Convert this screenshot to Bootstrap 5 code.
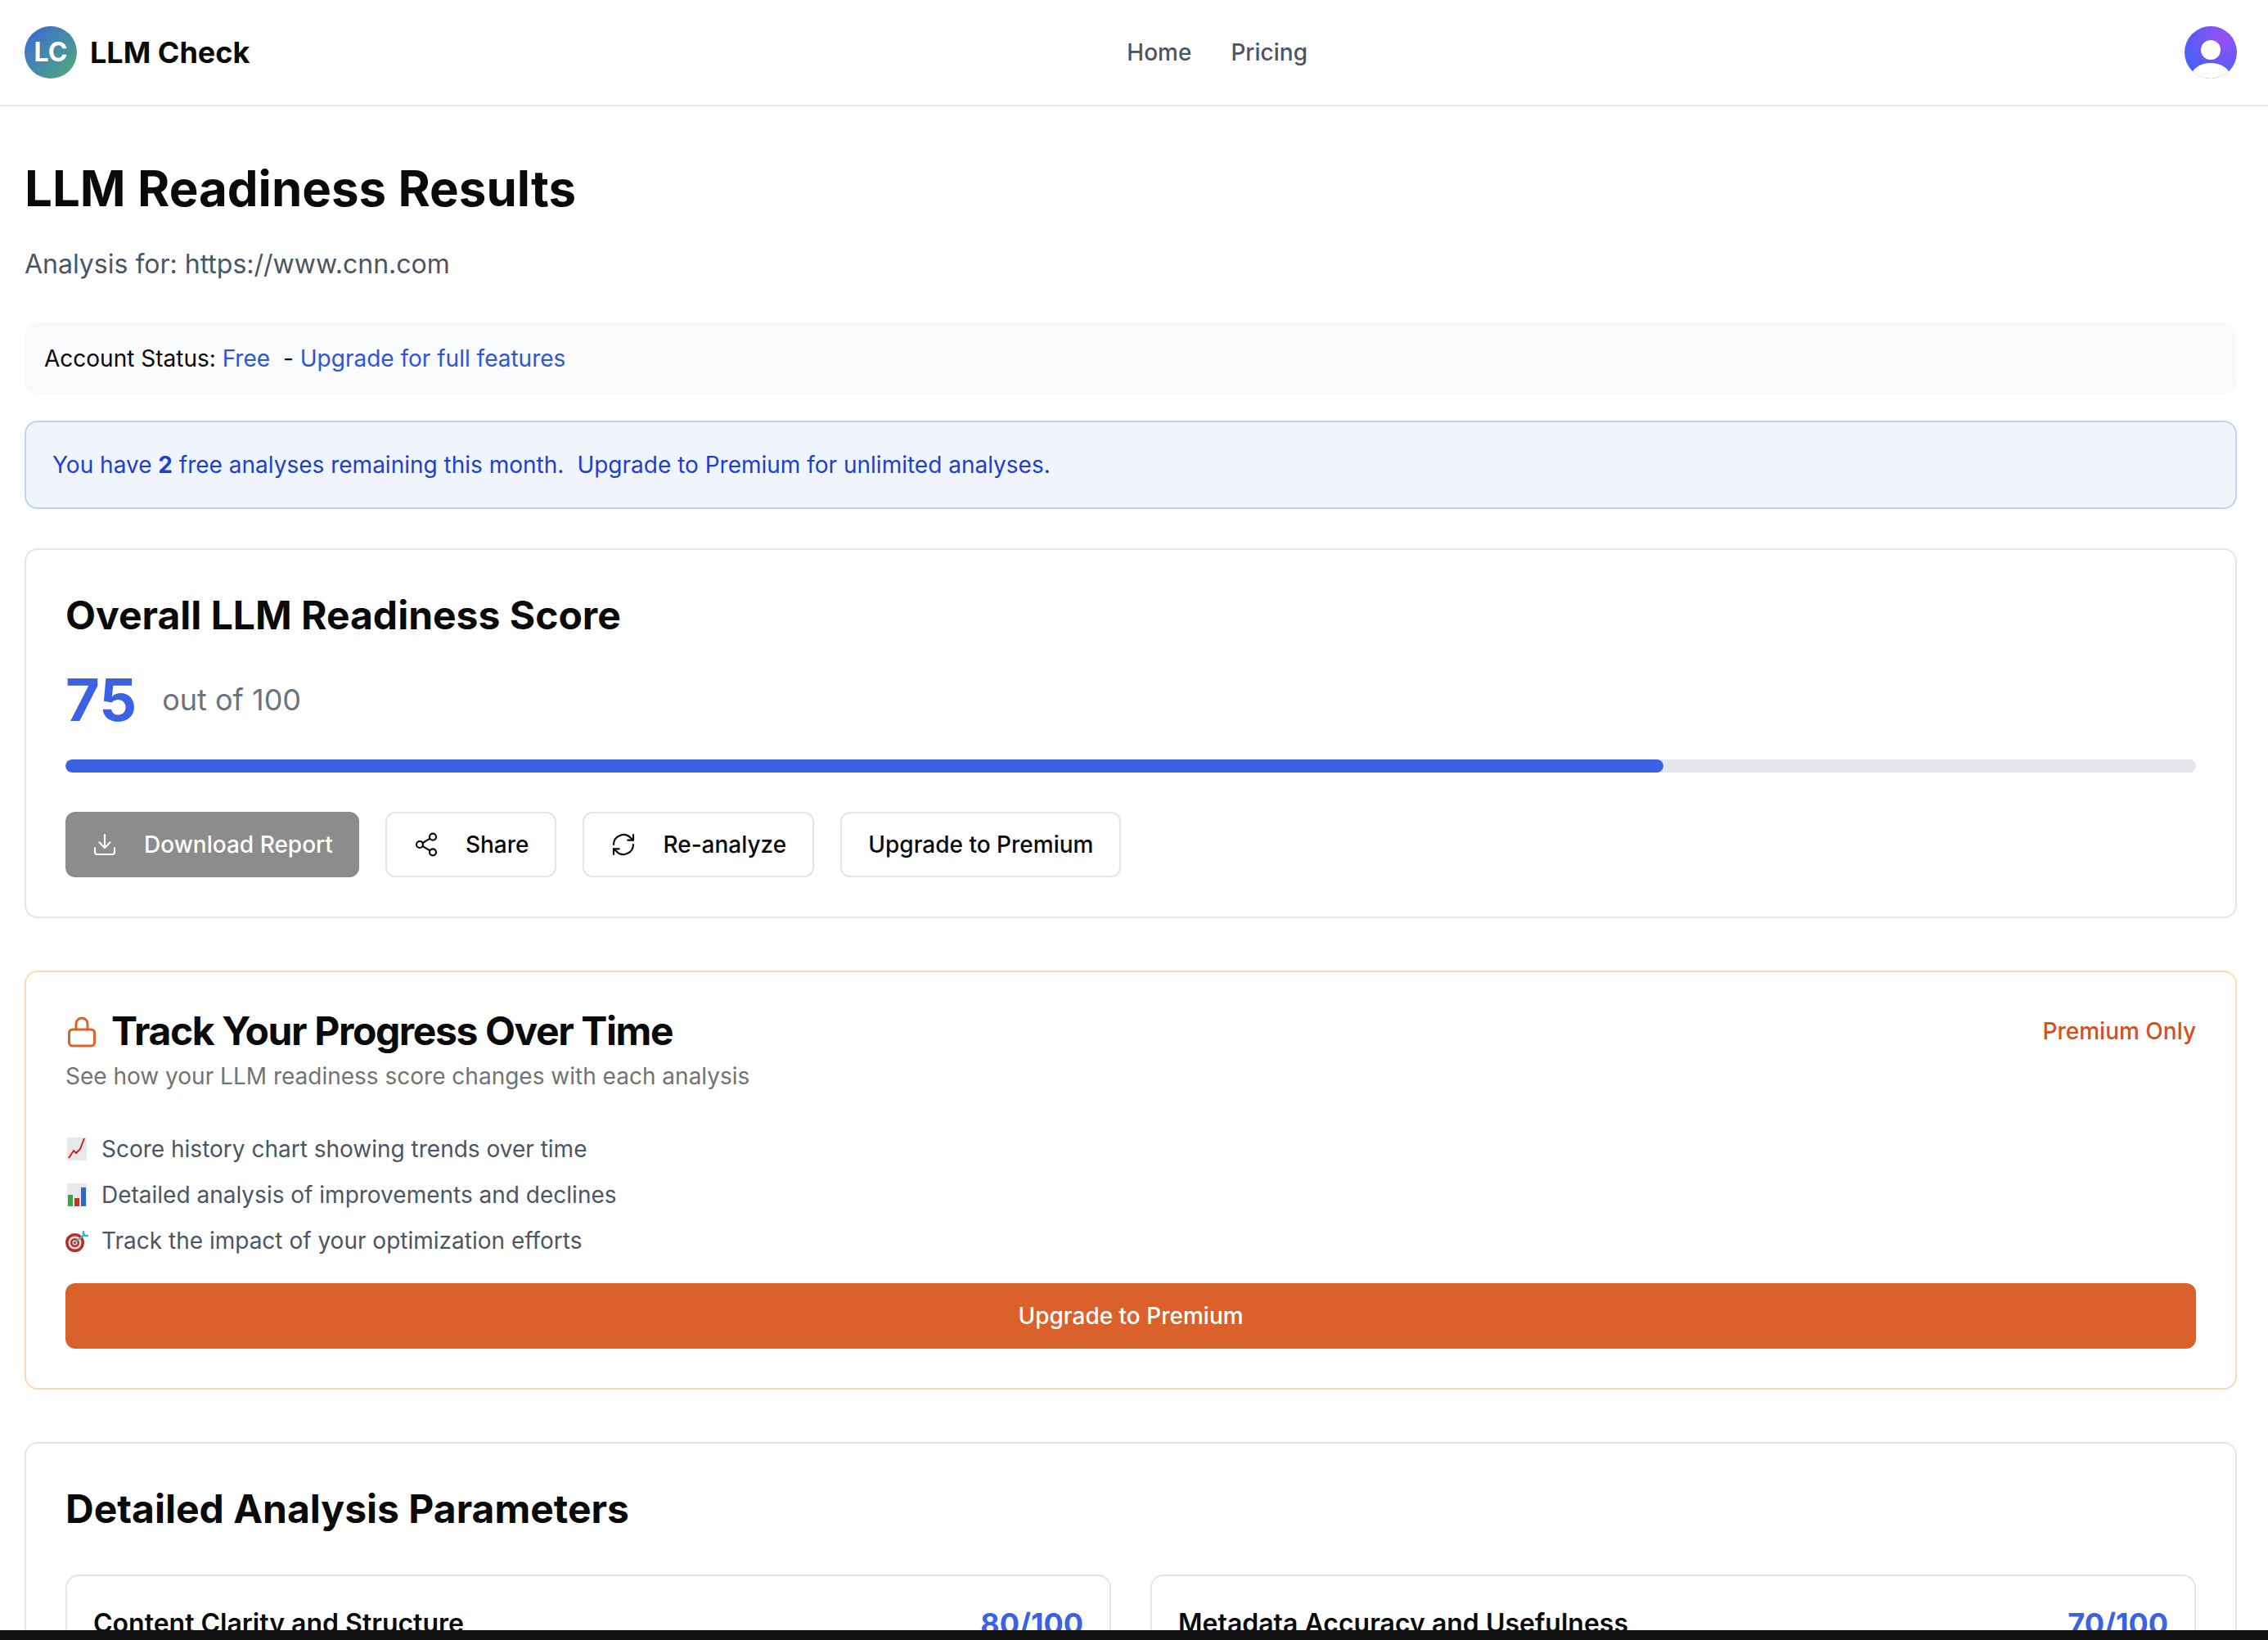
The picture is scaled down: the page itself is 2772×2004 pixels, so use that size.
<!DOCTYPE html>
<html lang="en">
<head>
    <meta charset="UTF-8">
    <meta name="viewport" content="width=device-width, initial-scale=1.0">
    <title>LLM Check</title>
    <link href="https://cdn.jsdelivr.net/npm/bootstrap@5.3.0/dist/css/bootstrap.min.css" rel="stylesheet">
    <script src="https://cdn.jsdelivr.net/npm/bootstrap@5.3.0/dist/js/bootstrap.bundle.min.js"></script>
    <style>
        html, body { height: 2004px; overflow: hidden; }
        body { font-family: Inter, "Liberation Sans", sans-serif; color: #0a0a0a; background: #fff; font-size: 28px; }
        .page-view { height: 1992px; overflow: hidden; }
        .bottom-strip { height: 12px; background: #111; }

        .top-bar { height: 130px; border-bottom: 2px solid #e5e5e5; padding: 0 38px 0 30px; position: relative; }
        .logo-dot { width: 64px; height: 64px; border-radius: 50%; background: linear-gradient(135deg, #3b66d9, #4fae76); color: #fff; font-size: 32px; font-weight: 700; }
        .logo-name { font-size: 36px; font-weight: 700; margin-left: 16px; color: #0a0a0a; }
        .top-links { gap: 48px; }
        .top-links .nav-link { padding: 0; font-size: 28px; font-weight: 500; color: #4b5563; }
        .avatar-dot { width: 64px; height: 64px; }

        .content-wrap { padding: 60px 38px 0 30px; }
        .page-title { font-size: 60px; font-weight: 700; line-height: 80px; margin: 0 0 29px; }
        .page-sub { font-size: 32px; line-height: 48px; color: #4b5563; margin: 0 0 47px; }

        .status-box { height: 88px; padding: 0 24px; background: #f9fafb; border-radius: 16px; font-size: 28px; margin-bottom: 32px; }
        .blue-link { color: #2f55d4; text-decoration: none; }
        .quota-box.alert { height: 108px; padding: 0 32px; background: #eff4fd; border: 2px solid #bfd4f7; border-radius: 16px; color: #1e40cf; font-size: 28px; margin-bottom: 48px; }
        .quota-box b { font-weight: 700; }
        .quota-box a { color: #1e40cf; text-decoration: none; font-weight: 400; }

        .panel.card { border: 2px solid #e5e5e5; border-radius: 16px; padding: 50px 48px 48px; --bs-card-bg: #fff; }
        .panel-title { font-size: 48px; font-weight: 700; line-height: 60px; margin: 0; }
        .score-num { font-size: 72px; font-weight: 700; color: #3a62e3; line-height: 80px; }
        .score-of { font-size: 36px; color: #6b7280; margin-left: 31px; }
        .score-row { margin: 33px 0 33px; }
        .score-bar.progress { height: 16px; border-radius: 8px; background: #e5e7eb; margin-bottom: 48px; }
        .score-bar .progress-bar { background: #3a62e3; border-radius: 8px; }

        .act-row { gap: 32px; }
        .act-btn.btn { height: 80px; padding: 0 32px; border: 2px solid #e5e5e5; border-radius: 12px; background: #fff; color: #0a0a0a; font-size: 28px; font-weight: 500; gap: 32px; }
        .act-btn.act-dim { background: #8c8c8c; border: 0; color: #fff; opacity: 1; }
        .act-btn svg { width: 32px; height: 32px; }

        .lock-panel.card { border-color: #fbd9ae; margin-top: 64px; padding: 42px 48px 48px; }
        .lock-title { font-size: 48px; font-weight: 700; line-height: 60px; margin: 0; letter-spacing: -1.4px; }
        .lock-tag { color: #d4501b; font-size: 28px; font-weight: 500; }
        .lock-sub { color: #737373; font-size: 28px; line-height: 40px; margin: 5px 0 41px; }
        .perk-list { list-style: none; margin: 0 0 24px; padding: 0; color: #4b5563; }
        .perk-list li { height: 56px; gap: 16px; }
        .perk-list svg { width: 28px; height: 28px; flex: none; }
        .upgrade-wide.btn { height: 80px; background: #da612c; border: 0; border-radius: 12px; color: #fff; font-size: 28px; font-weight: 500; }

        .detail-panel.card { margin-top: 64px; }
        .detail-panel { height: 400px; }
        .detail-title { font-size: 48px; font-weight: 700; line-height: 60px; margin: 0 0 50px; }
        .param-grid { display: grid; grid-template-columns: 1fr 1fr; gap: 48px; }
        .param-box.card { border: 2px solid #e5e5e5; border-radius: 16px; padding: 36px 32px 32px; }
        .param-name { font-size: 32px; font-weight: 600; line-height: 44px; }
        .param-score { font-size: 36px; font-weight: 700; color: #3a62e3; line-height: 44px; }
    </style>
</head>
<body class="d-flex flex-column">
<div class="page-view">
    <nav class="top-bar d-flex align-items-center justify-content-between">
        <a class="d-flex align-items-center text-decoration-none" href="#">
            <span class="logo-dot d-flex align-items-center justify-content-center">LC</span>
            <span class="logo-name">LLM Check</span>
        </a>
        <ul class="nav top-links">
            <li class="nav-item"><a class="nav-link" href="#">Home</a></li>
            <li class="nav-item"><a class="nav-link" href="#">Pricing</a></li>
        </ul>
        <svg class="avatar-dot" viewBox="0 0 64 64">
            <defs>
                <radialGradient id="avatarFill" cx="72%" cy="22%" r="75%">
                    <stop offset="0" stop-color="#9b4ff5"/>
                    <stop offset="1" stop-color="#4a5ff5"/>
                </radialGradient>
                <clipPath id="avatarClip"><circle cx="32" cy="32" r="32"/></clipPath>
            </defs>
            <circle cx="32" cy="32" r="32" fill="url(#avatarFill)"/>
            <circle cx="32" cy="29" r="12" fill="#fff"/>
            <ellipse cx="32" cy="62" rx="24" ry="17" fill="#fff" clip-path="url(#avatarClip)"/>
        </svg>
    </nav>

    <main class="content-wrap">
        <h1 class="page-title">LLM Readiness Results</h1>
        <p class="page-sub">Analysis for: https://www.cnn.com</p>

        <div class="status-box d-flex align-items-center">
            <span>Account Status:&nbsp;</span><a class="blue-link" href="#">Free</a>
            <span class="ms-2">&nbsp;-&nbsp;</span><a class="blue-link" href="#">Upgrade for full features</a>
        </div>

        <div class="alert quota-box d-flex align-items-center" role="alert">
            <span>You have <b>2</b> free analyses remaining this month.</span>
            <a class="ms-3" href="#">Upgrade to Premium for unlimited analyses.</a>
        </div>

        <section class="card panel">
            <h2 class="panel-title">Overall LLM Readiness Score</h2>
            <div class="score-row d-flex align-items-center">
                <span class="score-num">75</span>
                <span class="score-of">out of 100</span>
            </div>
            <div class="progress score-bar"><div class="progress-bar" style="width: 75%"></div></div>
            <div class="act-row d-flex">
                <button class="btn act-btn act-dim d-flex align-items-center" type="button">
                    <svg viewBox="0 0 24 24" fill="none" stroke="currentColor" stroke-width="1.6" stroke-linecap="round" stroke-linejoin="round"><path d="M21 15v4a2 2 0 0 1-2 2H5a2 2 0 0 1-2-2v-4"/><path d="M7 10l5 5 5-5"/><path d="M12 15V3"/></svg>
                    Download Report
                </button>
                <button class="btn act-btn d-flex align-items-center" type="button">
                    <svg viewBox="0 0 24 24" fill="none" stroke="currentColor" stroke-width="1.6" stroke-linecap="round" stroke-linejoin="round"><circle cx="18" cy="5" r="3"/><circle cx="6" cy="12" r="3"/><circle cx="18" cy="19" r="3"/><path d="M8.6 13.5l6.8 4M15.4 6.5l-6.8 4"/></svg>
                    Share
                </button>
                <button class="btn act-btn d-flex align-items-center" type="button">
                    <svg viewBox="0 0 24 24" fill="none" stroke="currentColor" stroke-width="1.6" stroke-linecap="round" stroke-linejoin="round"><path d="M3 12a9 9 0 0 1 15.5-6.2L21 8"/><path d="M21 3v5h-5"/><path d="M21 12a9 9 0 0 1-15.5 6.2L3 16"/><path d="M3 21v-5h5"/></svg>
                    Re-analyze
                </button>
                <button class="btn act-btn d-flex align-items-center" type="button">Upgrade to Premium</button>
            </div>
        </section>

        <section class="card panel lock-panel">
            <div class="d-flex align-items-center justify-content-between">
                <div class="d-flex align-items-center gap-3">
                    <svg width="40" height="40" viewBox="0 0 40 40" fill="none" stroke="#dc632d" stroke-width="3" stroke-linecap="round" stroke-linejoin="round"><rect x="4.500" y="18" width="31" height="20" rx="4"/><path d="M13 18v-7a7 7 0 0 1 14 0v7"/></svg>
                    <h2 class="lock-title">Track Your Progress Over Time</h2>
                </div>
                <span class="lock-tag">Premium Only</span>
            </div>
            <p class="lock-sub">See how your LLM readiness score changes with each analysis</p>
            <ul class="perk-list">
                <li class="d-flex align-items-center">
                    <svg viewBox="0 0 28 28"><rect x="2" y="0" width="24" height="28" fill="#e6e8ec"/><path d="M4 25l6-9 3 3 5-5 5-13" fill="none" stroke="#c8261c" stroke-width="2"/></svg>
                    Score history chart showing trends over time
                </li>
                <li class="d-flex align-items-center">
                    <svg viewBox="0 0 28 28"><rect x="2" y="0" width="24" height="28" fill="#e6e8ec"/><rect x="3" y="14" width="6" height="14" fill="#3aa447"/><rect x="11" y="18" width="6" height="10" fill="#c8321f"/><rect x="19" y="5" width="6" height="23" fill="#2f6bc4"/></svg>
                    Detailed analysis of improvements and declines
                </li>
                <li class="d-flex align-items-center">
                    <svg viewBox="0 0 28 28"><circle cx="11.500" cy="16.500" r="11.500" fill="#b92d28"/><circle cx="11.500" cy="16.500" r="8" fill="#f2e3df"/><circle cx="11.500" cy="16.500" r="5.500" fill="#b92d28"/><circle cx="11.500" cy="16.500" r="3" fill="#f2e3df"/><circle cx="11.500" cy="16.500" r="1.500" fill="#b92d28"/><path d="M12 16L24 6" stroke="#3fb6c9" stroke-width="2"/><path d="M22 2v6h6" fill="none" stroke="#3fb6c9" stroke-width="2.400"/></svg>
                    Track the impact of your optimization efforts
                </li>
            </ul>
            <button class="btn upgrade-wide w-100" type="button">Upgrade to Premium</button>
        </section>

        <section class="card panel detail-panel">
            <h2 class="detail-title">Detailed Analysis Parameters</h2>
            <div class="param-grid">
                <div class="card param-box">
                    <div class="d-flex justify-content-between align-items-center">
                        <span class="param-name">Content Clarity and Structure</span>
                        <span class="param-score">80/100</span>
                    </div>
                </div>
                <div class="card param-box">
                    <div class="d-flex justify-content-between align-items-center">
                        <span class="param-name">Metadata Accuracy and Usefulness</span>
                        <span class="param-score">70/100</span>
                    </div>
                </div>
            </div>
        </section>
    </main>
</div>
<div class="bottom-strip"></div>
</body>
</html>
